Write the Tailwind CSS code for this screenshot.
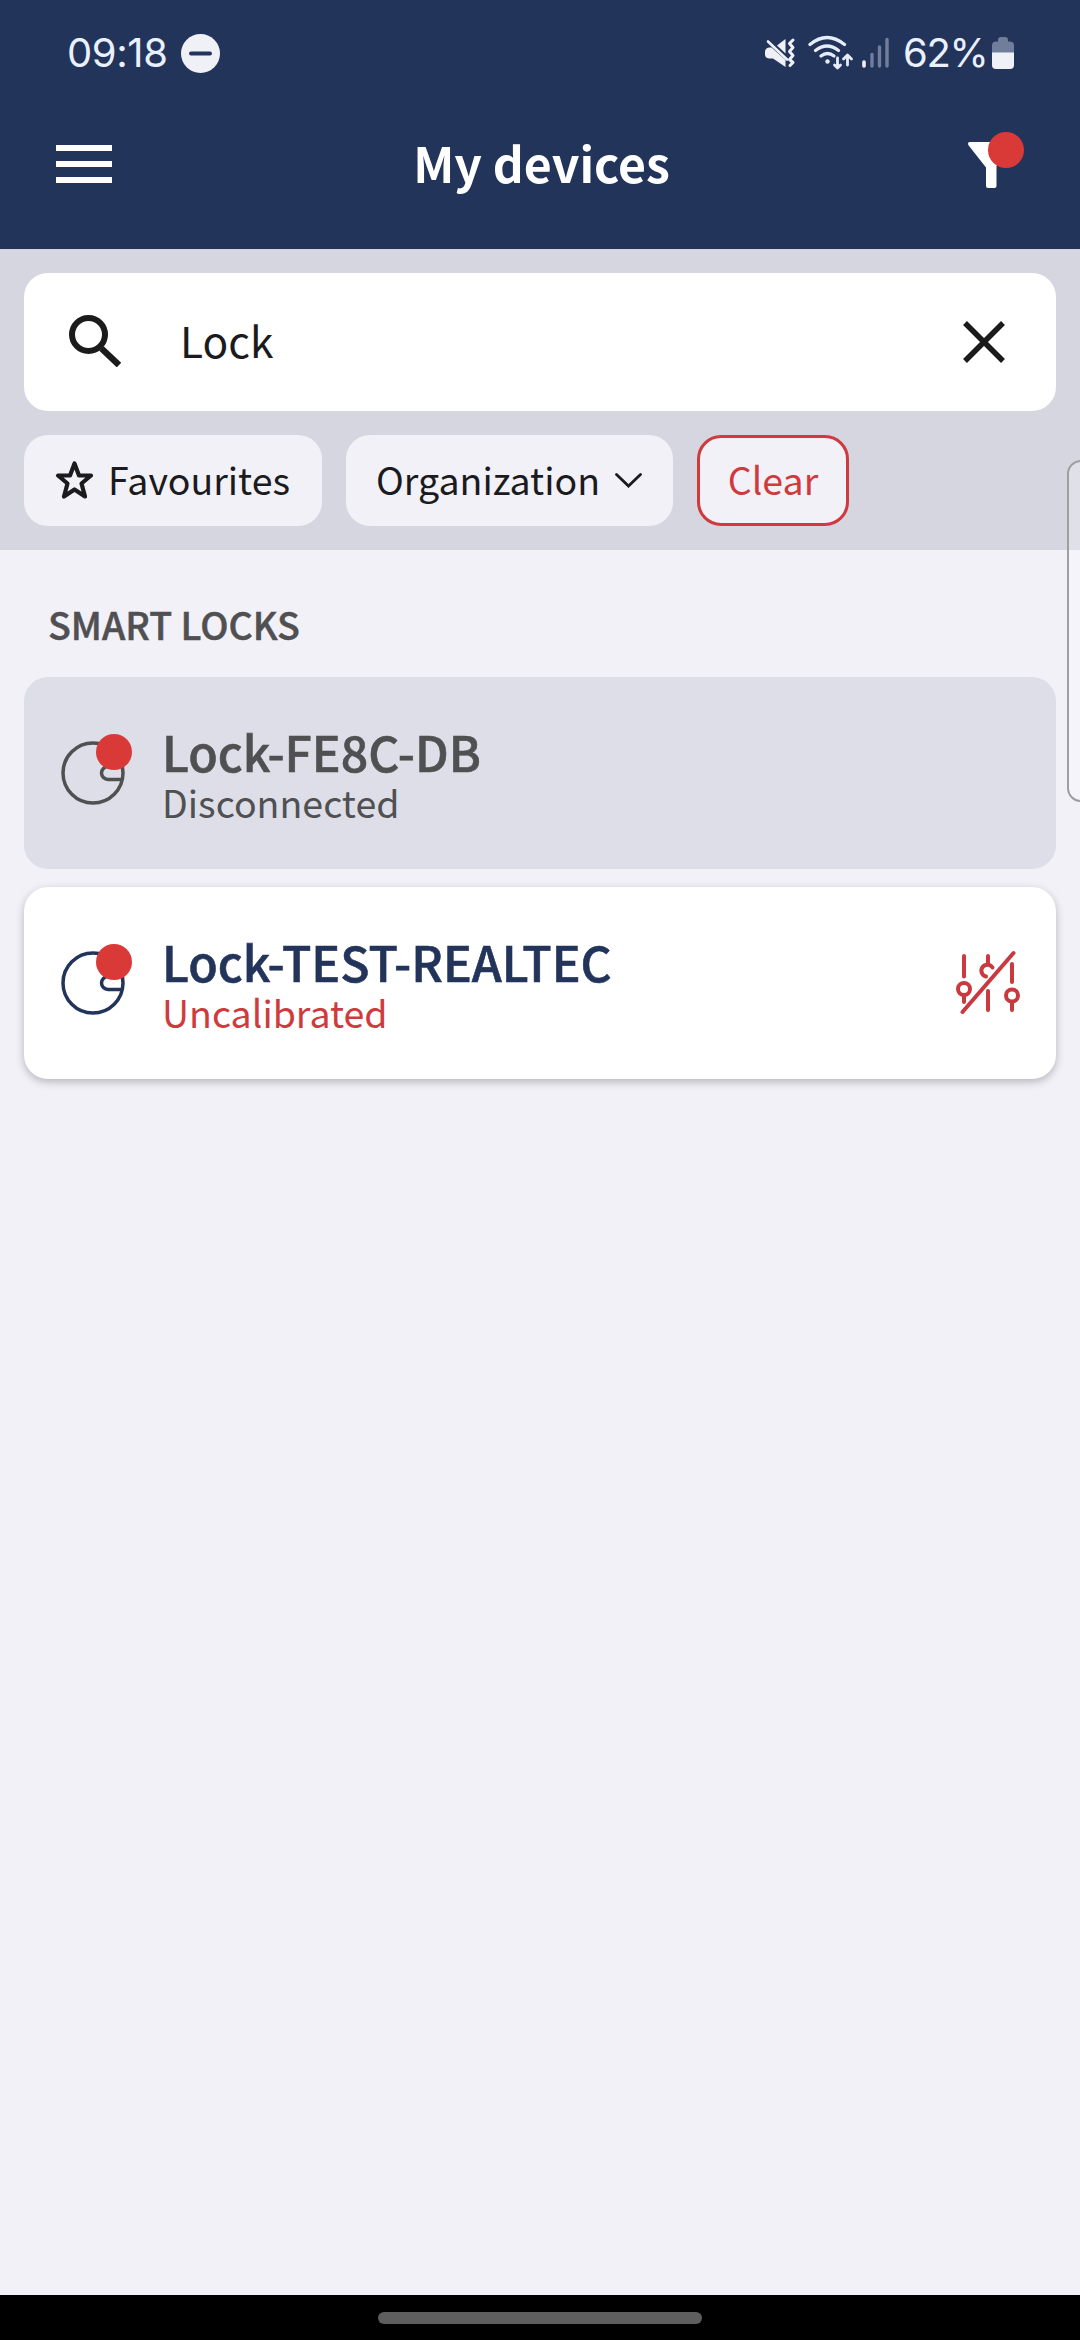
<!DOCTYPE html>
<html lang="en">
<head>
<meta charset="utf-8">
<title>My devices</title>
<script src="https://cdn.jsdelivr.net/npm/@tailwindcss/browser@4"></script>
</head>
<body class="relative flex h-[2340px] w-[1080px] flex-col overflow-hidden bg-[#f2f1f8] font-['Noto_Sans_CJK_SC',sans-serif] text-[#1b1b1d]">

  <header class="flex h-[249px] flex-col bg-[#23345b]">
    <div class="flex h-[106px] items-center justify-between pl-[67px] pr-[66px] font-[Inter,sans-serif] text-[40px] leading-none text-[#e9f0ff]">
      <div class="flex items-center gap-[14px]">
        <span class="w-[100px] whitespace-nowrap tracking-[-0.4px]">09:18</span>
        <svg class="size-[39px]" viewBox="0 0 39 39"><circle cx="19.5" cy="19.5" r="19.5" fill="#f0f1f6"/><path d="M10 19.5h19" stroke="#23345b" stroke-width="4" stroke-linecap="round"/></svg>
      </div>
      <svg class="h-[36px] w-[128px] shrink-0 ml-auto mr-[11px]" viewBox="762 35 128 36" fill="none" stroke-linecap="round">
        <path d="M775 45.500 783.500 39v14.500z" fill="#f0f1f6"/>
        <path d="M763 52q0-4 4-4.500h2.500L783.500 60v7L771 58.500h-4q-4-.5-4-4z" fill="#f0f1f6"/>
        <path d="M766 41.500 785 59.500" stroke="#f0f1f6" stroke-width="2.600"/>
        <path d="M791 40l-3.500 3.500 3.500 4-3.500 4 3.500 4-3.500 4 3.500 3-3 3" stroke="#f0f1f6" stroke-width="3" stroke-linejoin="round"/>
        <g stroke="#e6ecf9" stroke-width="3.300">
          <path d="M808 44.500q17-14 34.500 0"/><path d="M813.500 50.500q11.500-9 23 0"/><path d="M819 56q6.500-5 13 0"/>
          <path d="M835.500 58v9.500M832.500 65l3 3 3-3M845.500 65v-9.500M841.500 59l4-4 4 4" stroke-width="2.800" stroke-linejoin="round"/>
        </g>
        <circle cx="825.500" cy="61.500" r="2.200" fill="#e6ecf9"/>
        <path d="M862 62v4" stroke="#f0f1f6" stroke-width="3.600"/>
        <path d="M870 54.500V66M877.500 47V66M885 39.500V66" stroke="#707e9c" stroke-width="3.400"/>
      </svg>
      <span class="w-[84px] whitespace-nowrap tracking-[-1.300px]">62%</span>
      <svg class="ml-[5px] h-[32px] w-[22px]" viewBox="0 0 22 32"><path d="M6 3q0-3 3-3h4q3 0 3 3v1.500h2q4 0 4 4V16H0V8.500q0-4 4-4h2z" fill="#707e9c"/><path d="M0 15.500h22V28q0 4-4 4H4q-4 0-4-4z" fill="#f0f1f6"/></svg>
    </div>
    <div class="flex h-[116px] items-center justify-between pl-[56px] pr-[56px]">
      <svg class="h-[38px] w-[56px]" viewBox="0 0 56 38"><path d="M0 0h56v6H0zM0 16h56v6H0zM0 32h56v6H0z" fill="#fff"/></svg>
      <h1 class="pb-[3px] pl-[4px] text-[48.200px] font-bold leading-none text-white">My devices</h1>
      <svg class="mb-[8px] h-[58px] w-[57px]" viewBox="966 131 57 58"><path d="M969 142h42q2 0 .7 2.500L995.500 166v20q0 2-2 2H987q-2 0-2-2V167.500L967.300 145q-1-3 1.700-3z" fill="#fff"/><circle cx="1005" cy="150" r="18" fill="#d93a38"/></svg>
    </div>
  </header>

  <section class="flex h-[301px] flex-col gap-6 bg-[#d6d6e1] p-6">
    <div class="flex h-[138px] items-center rounded-3xl bg-white pl-[45px] pr-[51px]">
      <svg class="mb-[3px] h-[52px] w-[52px]" viewBox="69 315 52 52" fill="none" stroke="#1b1b1b" stroke-width="6"><circle cx="88.500" cy="334.500" r="16.500"/><path d="M101.500 348.500 119 365" stroke-width="6.500"/></svg>
      <span class="ml-[59px] pb-[4px] text-[42.500px] leading-none">Lock</span>
      <svg class="ml-auto size-[42px]" viewBox="0 0 42 42"><path d="M2 2 40 40M40 2 2 40" stroke="#1b1b1b" stroke-width="5.500"/></svg>
    </div>
    <div class="flex h-[91px] gap-6 text-[37.500px] leading-none">
      <div class="flex w-[298px] items-center rounded-3xl bg-[#f2f1f8] pl-[31px]">
        <svg class="mb-[2px] h-[40px] w-[40px] shrink-0" viewBox="0 0 40 40"><path d="M19.500 3.500 24 15.500H36L26.500 23.500 30 36.500 19.500 29.500 9 36.500 12.500 23.500 3 15.500H15z" fill="none" stroke="#1b1b1d" stroke-width="4.200" stroke-linejoin="round"/></svg>
        <span class="ml-[13px] pb-[3px]">Favourites</span>
      </div>
      <div class="flex w-[327px] items-center rounded-3xl bg-[#f2f1f8] pl-[30px]">
        <span class="pb-[3px]">Organization</span>
        <svg class="ml-auto mr-[31px] h-[15px] w-[27px]" viewBox="0 0 27 15"><path d="M1.500 1.500 13.500 13 25.500 1.500" fill="none" stroke="#1b1b1d" stroke-width="2.800" stroke-linecap="round"/></svg>
      </div>
      <div class="flex w-[152px] items-center justify-center rounded-3xl border-3 border-[#cf3b3d] bg-[#f2f1f8] pb-[3px] text-[#cf3b3d]">Clear</div>
    </div>
  </section>

  <main class="flex flex-1 flex-col px-6">
    <h2 class="flex h-[127px] items-center pl-[24px] pt-[21px] text-[37.500px] font-medium leading-none text-[#505052] [-webkit-text-stroke:0.5px]">SMART LOCKS</h2>
    <div class="flex flex-col gap-[18px]">
      <article class="flex h-[192px] items-center rounded-3xl bg-[#dedee8] pl-[37px] text-[#505052]">
        <svg class="mb-[8px] h-[72px] w-[72px]" viewBox="61 733 72 72" fill="none" stroke="currentColor" stroke-width="3.500"><circle cx="93" cy="773" r="30"/><path d="M122 779.500h-14a6.500 6.500 0 0 1 0-13h14"/><circle cx="114" cy="752" r="18" fill="#d93a38" stroke="none"/></svg>
        <div class="ml-[29px] flex flex-col pt-[7px]">
          <h3 class="h-[51px] text-[48.200px] font-medium leading-[50px] [-webkit-text-stroke:0.6px]">Lock-FE8C-DB</h3>
          <p class="h-[50px] text-[37.500px] leading-[50px]">Disconnected</p>
        </div>
      </article>
      <article class="flex h-[192px] items-center rounded-3xl bg-white pl-[37px] pr-[35px] text-[#23345b] shadow-[0_3px_8px_rgba(0,0,0,0.25)]">
        <svg class="mb-[8px] h-[72px] w-[72px]" viewBox="61 733 72 72" fill="none" stroke="currentColor" stroke-width="3.500"><circle cx="93" cy="773" r="30"/><path d="M122 779.500h-14a6.500 6.500 0 0 1 0-13h14"/><circle cx="114" cy="752" r="18" fill="#d93a38" stroke="none"/></svg>
        <div class="ml-[29px] flex flex-col pt-[7px]">
          <h3 class="h-[51px] text-[48.200px] font-medium leading-[50px] [-webkit-text-stroke:0.6px]">Lock-TEST-REALTEC</h3>
          <p class="h-[50px] text-[37.500px] leading-[50px] text-[#cf3b3d]">Uncalibrated</p>
        </div>
        <svg class="mb-[2px] ml-auto h-[64px] w-[66px]" viewBox="954 950 66 64" fill="none" stroke="#c93a40" stroke-width="4" stroke-linecap="round">
          <path d="M963 956v20.500M963 997v5M987 956v8M987 991v19M1011 964v18M1011 1002v8"/>
          <circle cx="963" cy="989" r="6"/><circle cx="1011" cy="995.500" r="6"/>
          <path d="M991.500 967.500a6 6 0 1 0-6.500 9"/>
          <path d="M961.500 1012 1012.500 953"/>
        </svg>
      </article>
    </div>
  </main>

  <footer class="flex h-[45px] justify-center bg-black pt-[17px]"><div class="h-[12px] w-[324px] rounded-full bg-[#5e5e5e]"></div></footer>

  <div class="absolute left-[1067px] top-[460px] h-[342px] w-[30px] rounded-[14px] border-2 border-[#9f9fa3] bg-white/25"></div>
</body>
</html>
